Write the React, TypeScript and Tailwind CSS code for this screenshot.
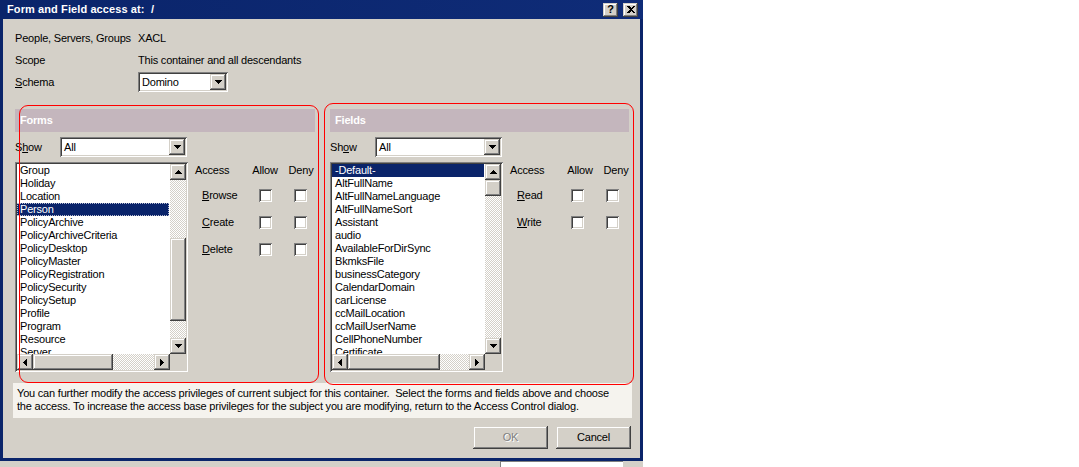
import React from "react";

// classic win9x/2000 bevels
const sunken =
  "shadow-[inset_1px_1px_0_#808080,inset_-1px_-1px_0_#ffffff,inset_2px_2px_0_#404040,inset_-2px_-2px_0_#d4d0c8]";
const raised =
  "shadow-[inset_-1px_-1px_0_#404040,inset_1px_1px_0_#d4d0c8,inset_-2px_-2px_0_#808080,inset_2px_2px_0_#ffffff]";
const checker =
  "bg-[image:repeating-conic-gradient(#ffffff_0_25%,#d4d0c8_0_50%)] bg-[length:2px_2px] bg-size-[2px_2px]";

type Dir = "up" | "down" | "left" | "right";

function Arrow({ dir }: { dir: Dir }) {
  const vertical = dir === "up" || dir === "down";
  const pts: Record<Dir, string> = {
    up: "3.5,0 7,4 0,4",
    down: "0,0 7,0 3.5,4",
    left: "4,0 4,7 0,3.5",
    right: "0,0 4,3.5 0,7",
  };
  return (
    <div className={`w-[16px] h-[16px] shrink-0 bg-[#d4d0c8] flex items-center justify-center ${raised}`}>
      <svg
        width={vertical ? 7 : 4}
        height={vertical ? 4 : 7}
        viewBox={vertical ? "0 0 7 4" : "0 0 4 7"}
        shapeRendering="crispEdges"
      >
        <polygon points={pts[dir]} fill="#000" />
      </svg>
    </div>
  );
}

function Combo({ value, width }: { value: string; width: string }) {
  return (
    <div className={`${width} h-[20px] bg-white p-[2px] flex ${sunken}`}>
      <div className="flex-1 pl-[2px] leading-[16px] whitespace-nowrap">{value}</div>
      <Arrow dir="down" />
    </div>
  );
}

function Ul({ text, at }: { text: string; at: number }) {
  return (
    <span className="whitespace-pre">
      {text.slice(0, at)}
      <span className="underline underline-offset-[1px]">{text[at]}</span>
      {text.slice(at + 1)}
    </span>
  );
}

function ListBox({
  items,
  selected,
  dotted,
  vTop,
  vThumb,
  hThumb,
}: {
  items: string[];
  selected: number;
  dotted?: boolean;
  vTop: string;
  vThumb: string;
  hThumb: string;
}) {
  return (
    <div className={`w-[173px] h-[210px] shrink-0 bg-white p-[2px] ${sunken}`}>
      <div className="grid grid-cols-[1fr_16px] grid-rows-[1fr_16px] h-full">
        <div className="overflow-hidden">
          {items.map((it, i) =>
            i === selected ? (
              <div
                key={it}
                className={`h-[13px] leading-[11px] pl-[2px] mr-[1px] whitespace-nowrap bg-[#0a246a] text-white border ${
                  dotted ? "border-dotted border-[#b8bcd0]" : "border-[#0a246a]"
                }`}
              >
                {it}
              </div>
            ) : (
              <div key={it} className="h-[13px] leading-[13px] pl-[3px] whitespace-nowrap">
                {it}
              </div>
            )
          )}
        </div>
        <div className="flex flex-col">
          <Arrow dir="up" />
          <div className={`flex-1 flex flex-col ${checker}`}>
            <div className={vTop} />
            <div className={`${vThumb} bg-[#d4d0c8] ${raised}`} />
          </div>
          <Arrow dir="down" />
        </div>
        <div className="flex">
          <Arrow dir="left" />
          <div className={`flex-1 flex ${checker}`}>
            <div className={`${hThumb} bg-[#d4d0c8] ${raised}`} />
          </div>
          <Arrow dir="right" />
        </div>
        <div className="bg-[#d4d0c8]" />
      </div>
    </div>
  );
}

function CheckBox({ pad }: { pad: string }) {
  return (
    <div className={pad}>
      <div className={`w-[13px] h-[13px] bg-white ${sunken}`} />
    </div>
  );
}

function Panel({
  title,
  width,
  showAt,
  items,
  selected,
  dotted,
  vTop,
  vThumb,
  hThumb,
  rights,
  allowPad,
  denyPad,
}: {
  title: string;
  width: string;
  showAt: number;
  items: string[];
  selected: number;
  dotted?: boolean;
  vTop: string;
  vThumb: string;
  hThumb: string;
  rights: string[];
  allowPad: string;
  denyPad: string;
}) {
  return (
    <div className={`${width} flex flex-col`}>
      <div className="h-[23px] bg-[#c4b6bd] text-white font-bold flex items-center pl-[5px]">{title}</div>
      <div className="mt-[5px] flex items-center h-[20px]">
        <div className="w-[45px]">
          <Ul text="Show" at={showAt} />
        </div>
        <Combo value="All" width="w-[127px]" />
      </div>
      <div className="mt-[5px] flex">
        <ListBox items={items} selected={selected} dotted={dotted} vTop={vTop} vThumb={vThumb} hThumb={hThumb} />
        <div className="ml-[7px] flex flex-col">
          <div className="h-[25px]">
            <div className="grid grid-cols-[52px_36px_36px] h-[13px] items-center">
              <span>Access</span>
              <span className="text-center">Allow</span>
              <span className="text-center">Deny</span>
            </div>
          </div>
          {rights.map((r) => (
            <div key={r} className="h-[27px]">
              <div className="grid grid-cols-[52px_36px_36px] h-[13px] items-center">
                <span className="pl-[7px]">
                  <Ul text={r} at={0} />
                </span>
                <CheckBox pad={allowPad} />
                <CheckBox pad={denyPad} />
              </div>
            </div>
          ))}
        </div>
      </div>
    </div>
  );
}

const forms = [
  "Group",
  "Holiday",
  "Location",
  "Person",
  "PolicyArchive",
  "PolicyArchiveCriteria",
  "PolicyDesktop",
  "PolicyMaster",
  "PolicyRegistration",
  "PolicySecurity",
  "PolicySetup",
  "Profile",
  "Program",
  "Resource",
  "Server",
];

const fields = [
  "-Default-",
  "AltFullName",
  "AltFullNameLanguage",
  "AltFullNameSort",
  "Assistant",
  "audio",
  "AvailableForDirSync",
  "BkmksFile",
  "businessCategory",
  "CalendarDomain",
  "carLicense",
  "ccMailLocation",
  "ccMailUserName",
  "CellPhoneNumber",
  "Certificate",
];

function TitleButton({ children }: { children: React.ReactNode }) {
  return (
    <div
      className={`w-[15px] h-[14px] bg-[#d4d0c8] flex items-center justify-center text-[11px] font-bold leading-none text-black ${raised}`}
    >
      {children}
    </div>
  );
}

function Button({ label, disabled }: { label: string; disabled?: boolean }) {
  return (
    <div
      className={`w-[75px] h-[23px] bg-[#d4d0c8] flex items-center justify-center ${raised} ${
        disabled ? "text-[#808080] [text-shadow:1px_1px_0_#ffffff]" : "text-black"
      }`}
    >
      {label}
    </div>
  );
}

export default function App() {
  return (
    <div className="w-[1079px] h-[467px] bg-white overflow-hidden font-['Liberation_Sans',Arial,sans-serif] text-[11px] tracking-[-0.2px] text-black">
      <div className="w-[643px] h-[461px] bg-[#0a246a] flex flex-col">
        {/* title bar */}
        <div className="h-[19px] shrink-0 flex items-center bg-gradient-to-r from-[#0a246a] to-[#0f2c78] pl-[7px] pr-[5px]">
          <div className="flex-1 text-white font-bold whitespace-pre tracking-[0.1px]">Form and Field access at:  /</div>
          <div className="flex gap-[5px]">
            <TitleButton>?</TitleButton>
            <TitleButton>
              <svg width="8" height="7" viewBox="0 0 8 7" shapeRendering="crispEdges">
                <path d="M0 0h2l2 2 2-2h2L5 3.5 8 7H6L4 5 2 7H0l3-3.5z" fill="#000" />
              </svg>
            </TitleButton>
          </div>
        </div>

        {/* body */}
        <div className="relative mx-[3px] h-[439px] bg-[#d4d0c8] flex flex-col pt-[8px]">
          <div className="pl-[12px] flex flex-col">
            <div className="h-[22px] flex items-center">
              <div className="w-[123px]">People, Servers, Groups</div>
              <div>XACL</div>
            </div>
            <div className="h-[22px] flex items-center">
              <div className="w-[123px]">Scope</div>
              <div>This container and all descendants</div>
            </div>
            <div className="h-[22px] flex items-center">
              <div className="w-[123px]">
                <Ul text="Schema" at={0} />
              </div>
              <Combo value="Domino" width="w-[90px]" />
            </div>
          </div>

          <div className="mt-[16px] pl-[12px] flex gap-[15px]">
            <Panel
              title="Forms"
              width="w-[300px]"
              showAt={1}
              items={forms}
              selected={3}
              dotted
              vTop="h-[58px]"
              vThumb="h-[83px]"
              hThumb="w-[80px]"
              rights={["Browse", "Create", "Delete"]}
              allowPad="pl-[12px]"
              denyPad="pl-[11px]"
            />
            <Panel
              title="Fields"
              width="w-[299px]"
              showAt={2}
              items={fields}
              selected={0}
              vTop="h-0"
              vThumb="h-[16px]"
              hThumb="w-[92px]"
              rights={["Read", "Write"]}
              allowPad="pl-[9px]"
              denyPad="pl-[8px]"
            />
          </div>

          <div className="mt-[11px] ml-[10px] w-[619px] h-[35px] bg-[#f5f3ee] pl-[4px] pt-[4px] leading-[13px]">
            <div className="whitespace-pre">
              You can further modify the access privileges of current subject for this container.  Select the forms and fields above and choose
            </div>
            <div className="whitespace-pre">
              the access. To increase the access base privileges for the subject you are modifying, return to the Access Control dialog.
            </div>
          </div>

          <div className="mt-[8px] flex justify-end gap-[8px] pr-[9px]">
            <Button label="OK" disabled />
            <Button label="Cancel" />
          </div>

          {/* red annotation outlines drawn over the dialog */}
          <div className="absolute left-[16px] top-[86px] w-[300px] h-[278px] border border-[#ff0000] rounded-[9px] pointer-events-none" />
          <div className="absolute left-[321px] top-[84px] w-[310px] h-[282px] border border-[#ff0000] rounded-[9px] pointer-events-none" />
        </div>
      </div>
      <div className="w-[643px] h-[6px] bg-[#d4d0c8] flex">
        <div className="ml-[500px] w-[123px] bg-white border-l border-t border-[#808080]" />
      </div>
    </div>
  );
}
